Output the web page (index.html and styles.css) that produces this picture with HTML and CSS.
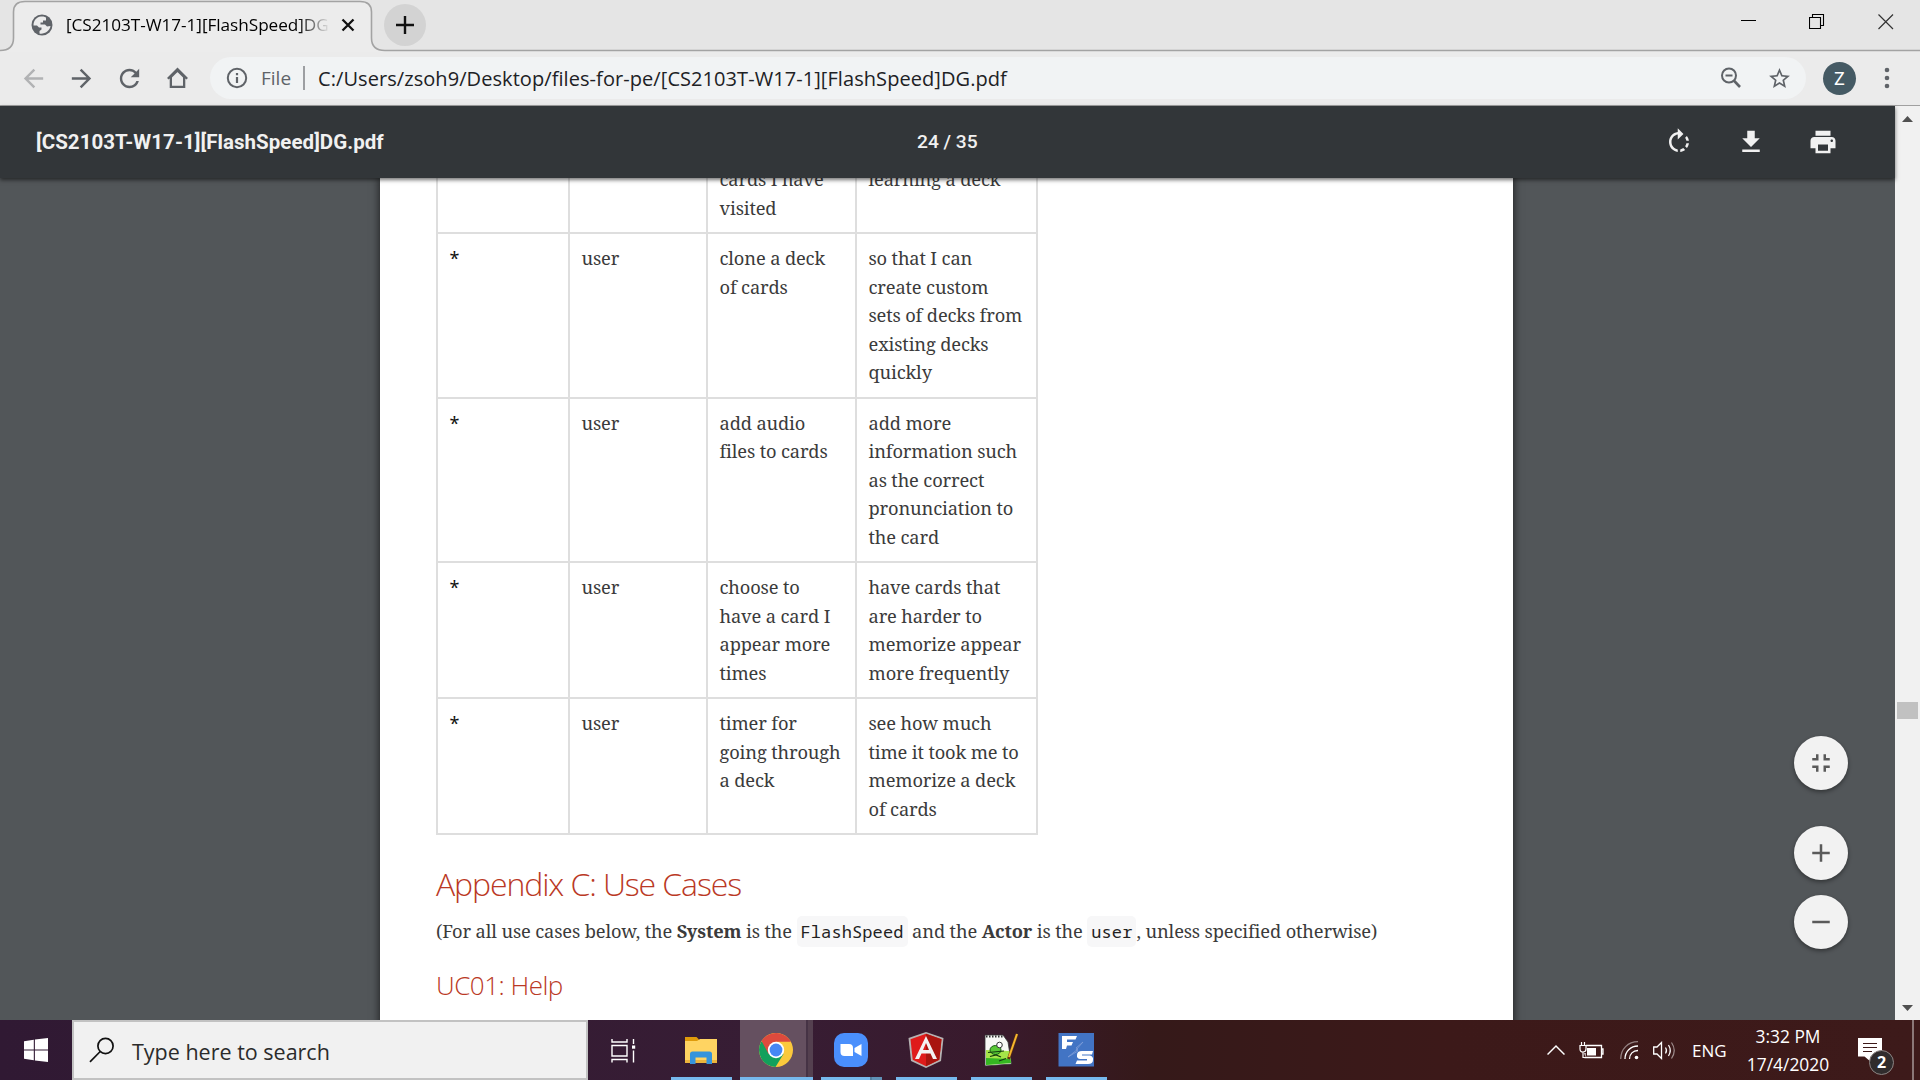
FILE: index.html
```html
<!DOCTYPE html>
<html lang="en">
<head>
<meta charset="utf-8">
<title>[CS2103T-W17-1][FlashSpeed]DG.pdf</title>
<link rel="stylesheet" href="styles.css">
</head>
<body>
<header class="tabstrip">
  <svg class="tab-outline" width="1920" height="52" viewBox="0 0 1920 52">
    <path d="M0 50.5C9 50.5 13.500 46 13.500 38V12C13.500 5 18 1.500 25 1.500H360C367 1.500 371.500 5 371.500 12V38C371.500 46 376 50.500 385 50.500H1920V52H0Z" fill="#ececec"/>
    <path d="M0 50.500C9 50.500 13.500 46 13.500 38V12C13.500 5 18 1.500 25 1.500H360C367 1.500 371.500 5 371.500 12V38C371.500 46 376 50.500 385 50.500H1920" fill="none" stroke="#a3a3a3" stroke-width="1.600"/>
  </svg>
  <div class="tab">
    <svg class="globe" width="22" height="22" viewBox="0 0 22 22"><circle cx="11" cy="11" r="10.500" fill="#5f6368"/><path d="M10 2.500C5 3 2.500 7 2.500 11.500H6L8 13.500H10.500V15.500L8.500 17V19.500C13 20.500 19 17 19.500 12L16 12.500 14 10.500H9.500V8.500H12V6.500H15V3.500L12.500 2.500Z" fill="#ececec"/></svg>
    <span class="tab-title">[CS2103T-W17-1][FlashSpeed]DG.pdf</span>
    <svg class="tab-close" width="14" height="14" viewBox="0 0 14 14"><path d="M1.500 1.500 12.500 12.500M12.500 1.500 1.500 12.500" stroke="#111" stroke-width="2.300"/></svg>
  </div>
  <div class="newtab"><svg width="18" height="18" viewBox="0 0 18 18"><path d="M9 0V18M0 9H18" stroke="#111" stroke-width="2.400"/></svg></div>
  <div class="window-buttons">
    <svg width="16" height="16" viewBox="0 0 16 16"><path d="M1 6.500H16" stroke="#000"/></svg>
    <svg width="16" height="16" viewBox="0 0 16 16"><path d="M.500 3.500H11.500V14.500H.500ZM3.500 3.500V.500H14.500V11.500H11.500" fill="none" stroke="#000" stroke-width="1.100"/></svg>
    <svg width="16" height="16" viewBox="0 0 16 16"><path d="M.500.500 15 15M15 .500.500 15" stroke="#333" stroke-width="1.200"/></svg>
  </div>
</header>

<nav class="toolbar">
  <svg class="nav-icon dim" viewBox="0 0 24 24"><path d="M20 11H7.830l5.590-5.590L12 4l-8 8 8 8 1.410-1.410L7.830 13H20z"/></svg>
  <svg class="nav-icon" viewBox="0 0 24 24"><path d="M4 11H16.170l-5.590-5.590L12 4l8 8-8 8-1.410-1.410L16.170 13H4z"/></svg>
  <svg class="nav-icon" viewBox="0 0 24 24"><path d="M17.650 6.350C16.200 4.900 14.210 4 12 4c-4.420 0-7.990 3.580-7.990 8s3.570 8 7.990 8c3.730 0 6.840-2.550 7.730-6h-2.080c-.82 2.330-3.040 4-5.650 4-3.310 0-6-2.690-6-6s2.690-6 6-6c1.660 0 3.140.69 4.220 1.780L13 11h7V4z"/></svg>
  <svg class="nav-icon" viewBox="0 0 24 24"><path d="M12 5.300 6.500 10.800V19H17.500V10.800ZM4 12.200 12 4.200 20 12.200" fill="none" stroke="#5f6368" stroke-width="1.900"/></svg>
  <div class="omnibox">
    <svg width="22" height="22" viewBox="0 0 22 22"><circle cx="11" cy="11" r="9.200" fill="none" stroke="#5f6368" stroke-width="2"/><path d="M11 10V16M11 6V8.200" stroke="#5f6368" stroke-width="2.200"/></svg>
    <span class="scheme">File</span>
    <span class="divider"></span>
    <span class="url">C:/Users/zsoh9/Desktop/files-for-pe/[CS2103T-W17-1][FlashSpeed]DG.pdf</span>
    <svg class="zoom-icon" width="22" height="22" viewBox="0 0 22 22"><g fill="none" stroke="#5f6368" stroke-width="2"><circle cx="9" cy="8.500" r="7"/><path d="M13.800 13.500 20 20" stroke-width="2.600"/><path d="M5.500 8.500H12.500"/></g></svg>
    <svg class="star" width="25" height="25" viewBox="0 0 24 24"><path fill="#5f6368" d="M22 9.240l-7.190-.62L12 2 9.190 8.630 2 9.240l5.460 4.730L5.820 21 12 17.270 18.180 21l-1.630-7.030L22 9.240zM12 15.400l-3.760 2.270 1-4.280-3.320-2.880 4.380-.38L12 6.100l1.710 4.040 4.380.38-3.320 2.880 1 4.280L12 15.400z"/></svg>
  </div>
  <div class="avatar">Z</div>
  <svg class="kebab" width="6" height="22" viewBox="0 0 6 22"><g fill="#5f6368"><circle cx="3" cy="3" r="2.300"/><circle cx="3" cy="11" r="2.300"/><circle cx="3" cy="19" r="2.300"/></g></svg>
</nav>

<main class="viewer">
  <section class="pdf">
    <div class="pdf-bar">
      <span class="pdf-title">[CS2103T-W17-1][FlashSpeed]DG.pdf</span>
      <span class="pdf-page">24 / 35</span>
      <div class="pdf-actions">
        <svg viewBox="0 0 24 24"><path d="M15.550 5.550L11 1v3.070C7.060 4.560 4 7.920 4 12s3.050 7.440 7 7.930v-2.020c-2.840-.48-5-2.940-5-5.910s2.160-5.430 5-5.910V10l4.550-4.450zM19.930 11c-.17-1.390-.72-2.730-1.620-3.890l-1.420 1.420c.54.75.88 1.600 1.020 2.470h2.020zM13 17.900v2.020c1.390-.17 2.740-.71 3.900-1.610l-1.440-1.440c-.75.54-1.590.89-2.460 1.030zm3.890-2.420l1.420 1.410c.9-1.160 1.450-2.500 1.620-3.890h-2.020c-.14.87-.48 1.720-1.020 2.480z"/></svg>
        <svg viewBox="0 0 24 24"><path d="M19 9h-4V3H9v6H5l7 7 7-7zM5 18v2h14v-2H5z"/></svg>
        <svg viewBox="0 0 24 24"><path d="M19 8H5c-1.660 0-3 1.340-3 3v6h4v4h12v-4h4v-6c0-1.660-1.340-3-3-3zm-3 11H8v-5h8v5zm3-7c-.55 0-1-.45-1-1s.45-1 1-1 1 .45 1 1-.45 1-1 1zm-1-9H6v4h12V3z"/></svg>
      </div>
    </div>
    <div class="canvas">
      <article class="page">
        <table class="stories">
          <colgroup><col class="c1"><col class="c2"><col class="c3"><col class="c4"></colgroup>
          <tr><td></td><td></td><td>cards I have<br>visited</td><td>learning a deck</td></tr>
          <tr><td class="star-cell">*</td><td>user</td><td>clone a deck<br>of cards</td><td>so that I can<br>create custom<br>sets of decks from<br>existing decks<br>quickly</td></tr>
          <tr><td class="star-cell">*</td><td>user</td><td>add audio<br>files to cards</td><td>add more<br>information such<br>as the correct<br>pronunciation to<br>the card</td></tr>
          <tr><td class="star-cell">*</td><td>user</td><td>choose to<br>have a card I<br>appear more<br>times</td><td>have cards that<br>are harder to<br>memorize appear<br>more frequently</td></tr>
          <tr><td class="star-cell">*</td><td>user</td><td>timer for<br>going through<br>a deck</td><td>see how much<br>time it took me to<br>memorize a deck<br>of cards</td></tr>
        </table>
        <h2>Appendix C: Use Cases</h2>
        <p class="intro">(For all use cases below, the <b>System</b> is the <code>FlashSpeed</code> and the <b>Actor</b> is the <code>user</code>, unless specified otherwise)</p>
        <h3>UC01: Help</h3>
      </article>
      <div class="fabs">
        <div class="fab fit"><svg viewBox="0 0 24 24"><path d="M5 16h3v3h2v-5H5v2zm3-8H5v2h5V5H8v3zm6 11h2v-3h3v-2h-5v5zm2-11V5h-2v5h5V8h-3z"/></svg></div>
        <div class="fab"><svg viewBox="0 0 24 24"><path d="M19 13h-6v6h-2v-6H5v-2h6V5h2v6h6v2z"/></svg></div>
        <div class="fab"><svg viewBox="0 0 24 24"><path d="M19 13H5v-2h14v2z"/></svg></div>
      </div>
    </div>
  </section>
  <aside class="scrollbar">
    <svg width="11" height="6" viewBox="0 0 11 6"><path d="M0 6 5.500 0 11 6Z" fill="#505050"/></svg>
    <div class="thumb"></div>
    <svg width="11" height="6" viewBox="0 0 11 6"><path d="M0 0H11L5.500 6Z" fill="#505050"/></svg>
  </aside>
</main>

<footer class="taskbar">
  <div class="start"><svg width="24" height="24" viewBox="0 0 24 24"><path fill="#fff" d="M0 3.200 9.800 1.800V11.400H0ZM10.900 1.600 24 0V11.400H10.900ZM0 12.500H9.800V22.200L0 20.800ZM10.900 12.500H24V24L10.900 22.400Z"/></svg></div>
  <div class="search">
    <svg width="26" height="26" viewBox="0 0 26 26"><circle cx="16.500" cy="9" r="7.600" fill="none" stroke="#111" stroke-width="1.700"/><path d="M11.200 14.500 1 24.800" stroke="#111" stroke-width="1.700"/></svg>
    <span>Type here to search</span>
  </div>
  <div class="taskview"><svg width="25" height="25" viewBox="0 0 25 25"><path d="M1 1V4H16V1M1 7.500H16V18H1ZM1 24.500V21.500H16V24.500M22.500 1V6M22.500 12.500V24.500" fill="none" stroke="#fff" stroke-width="1.400"/><path d="M21 7.500h3.200v3.200H21z" fill="#fff"/></svg></div>
  <div class="apps">
    <div class="app"><svg width="36" height="36" viewBox="0 0 36 36"><path d="M2 5H13.500L16 7.500V12H2Z" fill="#df9b0b"/><path d="M2 9H14L17 7H34V31H2Z" fill="#ffd462"/><path d="M2 28H34V31H2Z" fill="#ecb53c"/><path d="M7 32V22Q7 19.500 9.500 19.500H26.500Q29 19.500 29 22V32H23.500V25.500H12.500V32Z" fill="#3594dc"/></svg></div>
    <div class="app chrome"><svg width="36" height="36" viewBox="0 0 36 36"><circle cx="18" cy="18" r="17" fill="#fbc93c"/><path d="M18 18 3.300 9.500A17 17 0 0 0 17.500 35L25.500 22Z" fill="#12a05c"/><path d="M18 18V9.800H32.900A17 17 0 0 0 3.600 9L10.600 22Z" fill="#dc4a3d"/><circle cx="18" cy="18" r="8.200" fill="#fff"/><circle cx="18" cy="18" r="6.400" fill="#4687f4"/></svg></div>
    <div class="app zoom"><svg width="36" height="36" viewBox="0 0 36 36"><rect x="1" y="1" width="34" height="34" rx="10" fill="#4a8ffc"/><path d="M7.500 12H16Q20 12 20 16V24H11.500Q7.500 24 7.500 20ZM21.500 16 28.500 12V24L21.500 20Z" fill="#fff"/></svg></div>
    <div class="app"><svg width="36" height="36" viewBox="0 0 36 36"><path d="M18 0 35.500 6 33 29 18 36 3 29 .500 6Z" fill="#b5b2b2"/><path d="M18 1.800 33.500 7.300 31.300 27.800 18 34.200 4.700 27.800 2.500 7.300Z" fill="#df1b1b"/><path d="M18 1.800 33.500 7.300 31.300 27.800 18 34.200Z" fill="#a9140f"/><path d="M18 4 7 27H11L13.500 21.500H22.500L25 27H29ZM18 11 21 18H15Z" fill="#f3f1f1" fill-rule="evenodd"/></svg></div>
    <div class="app"><svg width="36" height="36" viewBox="0 0 36 36"><path d="M2 3H20L25 10 28.500 32 2 34Z" fill="#f7f8f5" stroke="#333" stroke-width=".8"/><path d="M3 18 26.500 19 28 31 3 33Z" fill="#a5e548"/><path d="M3 26 27.500 27 28 31 3 33Z" fill="#35b622"/><path d="M3 4.500H20" stroke="#333" stroke-width="2" stroke-dasharray="1.500 1.500"/><ellipse cx="12.500" cy="18" rx="5.500" ry="4.500" fill="#58c735" stroke="#175a13"/><circle cx="16.500" cy="13" r="2.800" fill="#fff" stroke="#333"/><path d="M5 20.500 21 19M7 24.500 13 23 18 25M16 29 23 26.500" fill="none" stroke="#153b10" stroke-width="1.200"/><path d="M34 2 25.500 27" stroke="#5e3511" stroke-width="3"/><path d="M34 2 26 25" stroke="#f6b62f" stroke-width="2"/></svg></div>
    <div class="app"><svg width="36" height="36" viewBox="0 0 36 36"><path d="M.5 1H36V34.500H.5Z" fill="#4274c4"/><path d="M25 10 18 16 20 17 10 25 20 19 18 18Z" fill="none" stroke="#7d9dd8" stroke-width=".8"/><path d="M4 4H19L17.500 7.500H9V10H15L13.500 13.500H9L8 17H4Z" fill="#fff"/><path d="M35 19H24Q19 19 19 23V25Q20 27 22 27H29V28.500H19L17.500 32H30Q35 32 35 28V26Q34 23.500 32 23.500H24V22.500H34Z" fill="#fff"/></svg></div>
  </div>
  <div class="tray">
    <svg class="chev" width="18" height="12" viewBox="0 0 18 12"><path d="M.500 10.500 9 2 17.500 10.500" fill="none" stroke="#fff" stroke-width="1.500"/></svg>
    <svg class="batt" width="25" height="17" viewBox="0 0 25 17"><path d="M7 3.500H22.500V15.500H6V11M22.500 7H24V12H22.500" fill="none" stroke="#fff" stroke-width="1.300"/><path d="M8 6H17V13.500H8Z" fill="#fff"/><path d="M1 3.500H7V7Q7 10 4 10 1 10 1 7ZM2.500 0V3.500M5.500 0V3.500M4 10V15.500H7" fill="#3d1a1a" stroke="#fff" stroke-width="1.200"/></svg>
    <svg class="wifi" width="19" height="19" viewBox="0 0 19 19"><g fill="none" stroke="#fff" stroke-width="1.300"><path d="M.700 18C.700 8 8 .700 18 .700" opacity=".45"/><path d="M5 18C5 10.500 10.500 5 18 5"/><path d="M9.500 18C9.500 13 13 9.500 18 9.500"/></g><circle cx="16.500" cy="16.500" r="1.800" fill="#fff"/></svg>
    <svg class="vol" width="23" height="19" viewBox="0 0 23 19"><path d="M.700 6H4L8.500 1.500V17.500L4 13H.700Z" fill="none" stroke="#fff" stroke-width="1.300"/><path d="M12.500 6.500Q14.500 9.500 12.500 12.500M15.500 4Q19 9.500 15.500 15" fill="none" stroke="#fff" stroke-width="1.200"/><path d="M18.500 1.500Q24 9.500 18.500 17.500" fill="none" stroke="#fff" opacity=".5" stroke-width="1.200"/></svg>
    <span class="lang">ENG</span>
    <div class="clock"><span>3:32 PM</span><span class="date">17/4/2020</span></div>
    <div class="notice"><svg width="24" height="24" viewBox="0 0 24 24"><path d="M0 0H24V18.500H12.500V23.500L6.500 18.500H0Z" fill="#fff"/><path d="M5 5.500H19M5 9.500H19M5 13.500H14" stroke="#3d1a1a" stroke-width="1.200"/></svg><span class="count">2</span></div>
    <div class="peek"></div>
  </div>
</footer>
</body>
</html>
```
FILE: styles.css
```css
* { box-sizing: border-box; }
body { margin: 0; width: 1920px; height: 1080px; overflow: hidden; display: flex; flex-direction: column; font-family: "Open Sans", "Noto Sans", sans-serif; color: #202124; }
svg { display: block; flex: none; }
span { white-space: nowrap; }

.tabstrip { height: 52px; flex: none; display: flex; align-items: flex-start; background: #e5e5e5; position: relative; }
.tab-outline { position: absolute; left: 0; top: 0; }
.tab { position: relative; display: flex; align-items: center; width: 371px; height: 50px; padding-left: 31px; }
.tab-title { width: 264px; margin-left: 13px; padding-bottom: 2px; overflow: hidden; font-size: 17.2px; letter-spacing: -0.05px; color: #000; -webkit-mask-image: linear-gradient(90deg, #000 88%, transparent); mask-image: linear-gradient(90deg, #000 88%, transparent); }
.tab-close { margin-left: 11px; }
.newtab { position: relative; width: 42px; height: 42px; margin: 4px 0 0 13px; border-radius: 50%; background: #d3d3d3; display: grid; place-items: center; }
.window-buttons { position: relative; margin: 14px 26px 0 auto; display: flex; gap: 53px; }

.toolbar { height: 54px; flex: none; display: flex; align-items: center; background: #ebebeb; border-bottom: 1px solid #a0a0a0; padding: 0 0 1px 19px; }
.nav-icon { width: 29px; height: 29px; margin-right: 19px; fill: #5f6368; }
.nav-icon.dim { fill: #b1b2b4; }
.omnibox { width: 1596px; height: 42px; flex: none; border-radius: 21px; background: #f1f3f4; display: flex; align-items: center; margin-left: -1px; padding-left: 16px; }
.scheme { margin-left: 13px; width: 31px; font-size: 19px; color: #5f6368; }
.divider { width: 2px; height: 24px; background: #9d9fa2; margin: 0 13px 0 11px; }
.url { font-size: 20px; letter-spacing: 0.07px; width: 720px; }
.zoom-icon { margin-left: 682px; }
.star { margin-left: 25px; }
.avatar { width: 33px; height: 33px; margin-left: 17px; border-radius: 50%; background: #455a64; color: #fff; font: 18px/33px Roboto, sans-serif; text-align: center; }
.kebab { margin-left: 28px; }

.viewer { height: 914px; flex: none; display: flex; }
.pdf { width: 1895px; display: flex; flex-direction: column; }
.pdf-bar { position: relative; z-index: 1; height: 72px; flex: none; display: grid; grid-template-columns: 881px 1fr auto; align-items: center; padding: 0 57px 0 36px; background: #323639; box-shadow: 0 2px 4px rgba(0,0,0,.55); color: #f1f1f1; font: 500 19.2px Roboto, sans-serif; }
.pdf-title { font-size: 20.5px; font-weight: 700; letter-spacing: 0.04px; }
.pdf-title, .pdf-page { padding-bottom: 1px; }
.pdf-actions { display: flex; gap: 42px; }
.pdf-actions svg { width: 30px; height: 30px; fill: #f1f1f1; }
.canvas { position: relative; height: 842px; overflow: hidden; background: #525659; }
.page { width: 1133px; height: 860px; margin-left: 380px; padding-left: 56px; background: #fff; box-shadow: 0 0 8px 1px rgba(0,0,0,.6); font-family: "Noto Serif", "DejaVu Serif Condensed", "DejaVu Serif", serif; color: #3b3b3b; overflow: hidden; }
.stories { margin-top: -25px; width: 601px; table-layout: fixed; border-collapse: collapse; font-size: 18.3px; letter-spacing: -0.15px; line-height: 28.5px; }
.c1 { width: 132px; } .c2 { width: 138px; } .c3 { width: 149px; } .c4 { width: 181px; }
.stories td { border: 2px solid #dedede; padding: 10px 0 10px 11.5px; vertical-align: top; white-space: nowrap; }
.stories .star-cell { color: #111; font-family: "Noto Sans", sans-serif; font-size: 18px; }
h2 { margin: 25px 0 0; font: 300 32px/48px "Open Sans", sans-serif; letter-spacing: -1.1px; color: #ba3925; }
.intro { margin: 6px 0 0; font-size: 18.3px; letter-spacing: -0.14px; line-height: 34px; white-space: nowrap; }
code { font: 17px "Droid Sans Mono", "Noto Sans Mono", "DejaVu Sans Mono", monospace; letter-spacing: 0.1px; color: #222; background: #f7f7f8; border-radius: 5px; padding: 4px; }
h3 { margin: 19px 0 0; font: 300 26px/36px "Open Sans", sans-serif; letter-spacing: -0.5px; color: #ba3925; }
.fabs { position: absolute; right: 47px; top: 558px; display: flex; flex-direction: column; gap: 15px; }
.fab { width: 54px; height: 54px; border-radius: 50%; background: #f2f2f2; box-shadow: 0 2px 4px rgba(0,0,0,.4); display: grid; place-items: center; }
.fab.fit { margin-bottom: 21px; }
.fab svg { width: 30px; height: 30px; fill: #5a5a5a; }
.scrollbar { width: 25px; background: #f1f1f1; display: flex; flex-direction: column; align-items: center; justify-content: space-between; padding: 10px 0 9px; }
.thumb { width: 21px; height: 17px; background: #c1c1c1; margin-top: 293px; }

.taskbar { height: 60px; flex: none; display: flex; background: linear-gradient(90deg, #301933 0, #371d34 40%, #391a2c 52%, #351919 60%, #3c1919 75%, #3d1a1a 100%); color: #fff; }
.start { width: 72px; display: grid; place-items: center; }
.search { width: 516px; background: #f1f1f1; border: 2px solid #c2c2c2; display: flex; align-items: center; padding-left: 15px; }
.search span { margin-left: 17px; padding-top: 2px; font-size: 21.5px; color: #2b2b2b; }
.taskview { width: 83px; padding: 18px 0 0 23px; }
.apps { display: flex; gap: 14px; }
.app { position: relative; width: 61px; display: grid; place-items: center; border-bottom: 3px solid #76b9ed; padding-right: 2px; }
.app svg { margin-top: 3px; }
.chrome { width: 73px; margin-left: -6px; margin-right: -6px; background: linear-gradient(90deg, #655060 66px, #463345 66px 68px, #54404f 68px); padding-right: 1px; }
.zoom { border-image: linear-gradient(90deg, #76b9ed 47px, #527f9f 47px 49px, #6092b7 49px) 3; }
.tray { margin-left: auto; display: flex; align-items: center; }
.batt { margin-left: 14px; margin-right: 1px; }
.wifi { margin-left: 15px; }
.vol { margin-left: 14px; }
.lang { width: 34px; margin-left: 16px; font-size: 17px; }
.clock { width: 84px; margin-left: 20px; display: flex; flex-direction: column; align-items: center; font-size: 17.4px; line-height: 28px; }
.notice { position: relative; margin-left: 28px; width: 24px; height: 24px; }
.count { position: absolute; left: 11px; top: 12px; width: 25px; height: 25px; border-radius: 50%; border: 1px solid #8d8584; background: #302c2d; font: bold 16px/23px "Open Sans", sans-serif; text-align: center; }
.peek { width: 8px; height: 60px; margin-left: 30px; border-left: 2px solid #8b7777; }
```
